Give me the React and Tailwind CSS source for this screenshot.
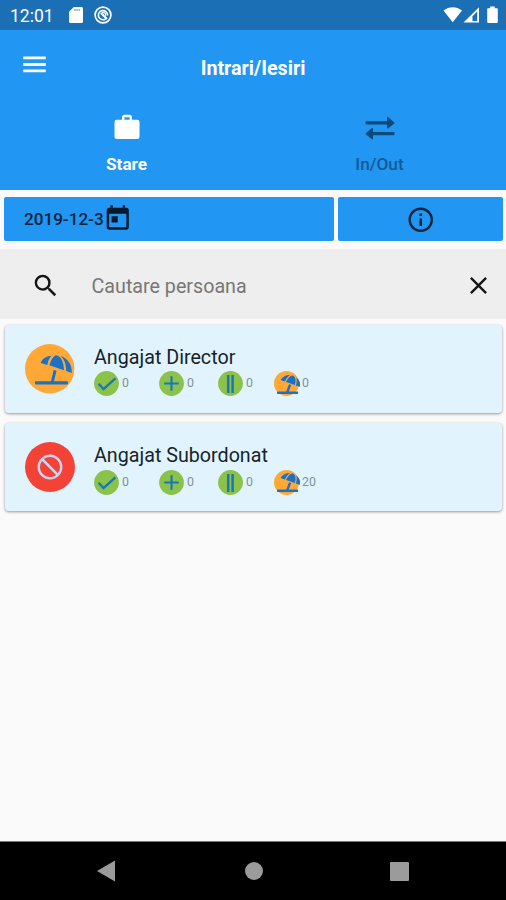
import {
  MdBlock,
  MdClose,
  MdInfoOutline,
  MdSearch,
  MdToday,
} from "react-icons/md";
import { FaUmbrellaBeach } from "react-icons/fa";

const employees = [
  { name: "Angajat Director", status: "vacation", counts: [0, 0, 0, 0] },
  { name: "Angajat Subordonat", status: "blocked", counts: [0, 0, 0, 20] },
];

function StatusBar() {
  return (
    <div className="h-[30px] shrink-0 bg-[#1a6fb5] flex items-center pl-[10px] pr-[7.5px] text-white">
      <span className="w-[59px] text-[17.5px] leading-none pt-[3px]">12:01</span>
      <svg viewBox="0 0 14 16" className="w-[14px] h-[16px]">
        <path d="M4.800 0H12.500Q14 0 14 1.500V14.500Q14 16 12.500 16H1.500Q0 16 0 14.500V4.800Z" fill="currentColor" />
        <path d="M5.300 3h6.200" stroke="#1a6fb5" strokeWidth="1.600" strokeDasharray="1.400 .7" opacity=".7" />
      </svg>
      <svg viewBox="0 0 18 18" className="w-[18px] h-[18px] ml-[11px]" fill="none" stroke="currentColor">
        <circle cx="9" cy="9" r="7.900" strokeWidth="1.700" />
        <path d="M11.600 13A4.600 4.600 0 1 1 13.600 9.500" strokeWidth="1.600" />
        <path d="M7 7l6 6" strokeWidth="2.100" />
        <path d="M8.200 6.600a2.600 2.600 0 0 1 3.400 3.200" strokeWidth="1.300" />
      </svg>
      <svg viewBox="0 0 56 18" className="w-[56px] h-[18px] ml-auto" fill="currentColor">
        <path d="M0.500 4.600C6 0 13.500 0 19 4.600L9.700 16.200Z" />
        <path d="M20.500 16.500L36 1.200V16.500Z" />
        <path d="M29.500 10.200L34.200 5.200V15H29.500Z" fill="#1a6fb5" />
        <path d="M45 2.300h2.200V0.500h4.600v1.800h2.200a.8.8 0 0 1 .8.8v13a.8.8 0 0 1-.8.8h-9a.8.8 0 0 1-.8-.8v-13a.8.8 0 0 1 .8-.8z" />
      </svg>
    </div>
  );
}

function SwapArrows() {
  return (
    <svg viewBox="0 0 30 24" className="w-[30px] h-[24px]" fill="#0d4a7a">
      <path d="M1.500 5.200H22V1.800Q22 .2 23.300 1.200L29 6.300Q29.800 7 29 7.700L23.300 12.200Q22 13.100 22 11.500V8.400H1.500Q.5 8.400.5 7.400V6.200Q.5 5.200 1.500 5.200z" />
      <path d="M28.500 16H8V12.900Q8 11.300 6.700 12.300L1 17.100Q.2 17.800 1 18.500L6.700 23.100Q8 24 8 22.400V19.200H28.500Q29.500 19.200 29.500 18.200V17Q29.500 16 28.500 16z" />
    </svg>
  );
}

function Briefcase() {
  return (
    <svg viewBox="0 0 26 26" className="w-[26px] h-[26px]">
      <rect x=".5" y="5.700" width="25" height="19.300" rx="2.200" fill="currentColor" />
      <path d="M9.200 6V3.500Q9.200 2 10.700 2H15.300Q16.800 2 16.800 3.500V6" fill="none" stroke="currentColor" strokeWidth="2.400" />
    </svg>
  );
}

function Header() {
  return (
    <header className="h-[159.5px] shrink-0 bg-[#2196f3] text-white">
      <div className="h-[69px] grid grid-cols-[70px_1fr_70px] items-center">
        <svg viewBox="0 0 23 17" className="w-[23px] h-[17px] ml-[23px]" fill="currentColor">
          <path d="M.3 .5h22.500v2.800H.3zM.3 7.100h22.500v2.800H.3zM.3 13.400h22.500v2.800H.3z" />
        </svg>
        <h1 className="text-center text-[19.7px] font-bold pt-[8px]">Intrari/Iesiri</h1>
      </div>
      <div className="h-[90px] grid grid-cols-2">
        <div className="flex flex-col items-center pt-[15px]">
          <Briefcase />
          <span className="mt-[12px] text-[17.200px] leading-6 font-bold">Stare</span>
        </div>
        <div className="flex flex-col items-center pt-[17px]">
          <SwapArrows />
          <span className="mt-[12px] text-[17.200px] leading-6 font-medium text-[#145a92]">In/Out</span>
        </div>
      </div>
    </header>
  );
}

function BeachBadge() {
  return (
    <svg viewBox="0 0 50 50" className="w-[50px] h-[50px]">
      <circle cx="24.700" cy="24.700" r="24.700" fill="#ffa836" />
      <g fill="#1b70c8">
        <path d="M15.700 18.900C17.500 14.500 21 12.200 26.500 11.700C24 14.500 23 17 22.300 21Z" />
        <path d="M24.400 21.300C25.500 16.500 28 12.500 31 11.200C36 12 38.600 17.500 39 26.300Z" />
        <path d="M35.500 11.800C43 14.500 47 20.500 46.800 29L41.200 27C41.200 20.500 39.500 15.500 35.500 11.800Z" />
        <path d="M28.700 26L31.500 26.800L28.800 38H25.800Z" />
        <rect x="10" y="37.300" width="33" height="3.100" rx="1" />
      </g>
    </svg>
  );
}

function CountIcon({ kind }) {
  if (kind === "vacation") {
    return (
      <span className="w-[25px] h-[25px] rounded-full bg-[#ffa836] flex items-center pl-[2.5px] pt-px">
        <FaUmbrellaBeach className="w-[23.5px] h-[19px] shrink-0 text-[#1b70c8]" />
      </span>
    );
  }

  return (
    <svg viewBox="0 0 25 25" className="w-[25px] h-[25px]" fill="none" stroke="#1976b8" strokeWidth="2.1">
      <circle cx="12.500" cy="12.500" r="12.400" fill="#8bc34a" stroke="none" />
      {kind === "check" && <path d="M4.600 12.800l4.900 5.300L21.400 7.300" strokeWidth="2.300" />}
      {kind === "plus" && <path d="M5.200 12.500h14.600M12.500 5.200v14.600" />}
      {kind === "pause" && <path d="M10.200 4v18M14.600 4v18" strokeWidth="2.500" />}
    </svg>
  );
}

function Count({ kind, value }) {
  return (
    <div className="flex items-center">
      <CountIcon kind={kind} />
      <span className="ml-[3px] text-[12.3px] leading-none text-[#80909a]">{value}</span>
    </div>
  );
}

function EmployeeCard({ name, status, counts }) {
  return (
    <div className="h-[88px] flex pl-5 bg-[#e1f4fe] rounded-[4px] shadow-[0_1px_3px_rgba(0,0,0,0.4)]">
      <div className="w-[50px] mt-[19px]">
        {status === "vacation" ? (
          <BeachBadge />
        ) : (
          <div className="w-[49.5px] h-[49.5px] rounded-full bg-[#f44336] flex items-center justify-center">
            <MdBlock className="w-[30px] h-[30px] -scale-x-100 text-[#c5d5f2]" />
          </div>
        )}
      </div>
      <div className="ml-[19px] pt-[20px]">
        <h2 className="text-[19.7px] leading-[26px] text-[#16232b]">{name}</h2>
        <div className="mt-[0.5px] grid grid-cols-[65px_59px_56px_60px]">
          <Count kind="check" value={counts[0]} />
          <Count kind="plus" value={counts[1]} />
          <Count kind="pause" value={counts[2]} />
          <Count kind="vacation" value={counts[3]} />
        </div>
      </div>
    </div>
  );
}

function NavBar() {
  return (
    <nav className="h-[59px] shrink-0 bg-black border-t border-[#777] grid grid-cols-[180px_146px_180px] items-center text-[#9b9b9b]">
      <svg viewBox="0 0 18 22" className="w-[18px] h-[22px] ml-[97px]" fill="currentColor">
        <path d="M0 11L18 .5V21.500Z" />
      </svg>
      <span className="w-[18px] h-[18px] rounded-full bg-[#9b9b9b] justify-self-center ml-px" />
      <span className="w-[19px] h-[19px] rounded-[1px] bg-[#9b9b9b] ml-[64px]" />
    </nav>
  );
}

function App() {
  return (
    <div className="w-full h-screen flex flex-col bg-[#fafafa] overflow-hidden font-['Roboto',sans-serif]">
      <StatusBar />
      <Header />

      {/* Date picker and info buttons */}
      <div className="mt-[7.500px] px-1 pr-[3px] flex gap-1">
        <button className="h-[44px] w-[330px] rounded-[2px] bg-[#2196f3] flex items-center pl-5 text-[#06243c]">
          <span className="text-[17.1px] font-medium pt-[2px]">2019-12-3</span>
          <MdToday className="w-[29.5px] h-[29.5px] -ml-px text-[#07192a]" />
        </button>
        <button className="h-[44px] flex-1 rounded-[2px] bg-[#2196f3] flex items-center justify-center text-[#07243c]">
          <MdInfoOutline className="w-[29.5px] h-[29.5px] mt-px" />
        </button>
      </div>

      {/* Search */}
      <div className="mt-2 h-[70px] shrink-0 bg-[#eeeeee] flex items-center pl-[31px] pr-[13px] pt-[3px]">
        <MdSearch className="w-[29.5px] h-[29.5px] text-[#161616]" />
        <span className="ml-[31px] text-[19.7px] pt-[2px] text-[#777]">Cautare persoana</span>
        <MdClose className="w-[29px] h-[29px] ml-auto text-[#161616]" />
      </div>

      <main className="flex-1 pt-[5.5px] pl-[5px] pr-1 flex flex-col gap-[10.5px]">
        {employees.map((employee) => (
          <EmployeeCard key={employee.name} {...employee} />
        ))}
      </main>

      <NavBar />
    </div>
  );
}

export default App;
